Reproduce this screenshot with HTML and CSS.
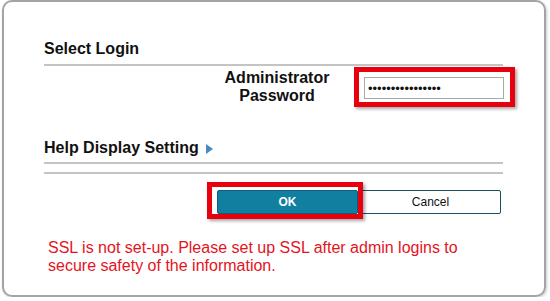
FILE: index.html
```html
<!DOCTYPE html>
<html lang="en">
<head>
    <meta charset="UTF-8">
    <title>Select Login</title>
    <link rel="stylesheet" href="styles.css">
</head>
<body>
<div class="panel">
    <h2 class="section-title">Select Login</h2>
    <div class="rule"></div>

    <div class="login-row">
        <div class="login-label">Administrator<br>Password</div>
        <div class="mark">
            <input class="pw-input" type="password" value="adminpassword123">
        </div>
    </div>

    <h2 class="section-title help-title">Help Display Setting
        <svg class="arrow" width="7" height="10" viewBox="0 0 7 10"><path d="M0 0 L7 5 L0 10 Z" fill="#4a88c2"/></svg>
    </h2>
    <div class="rule rule-help"></div>
    <div class="rule rule-second"></div>

    <div class="buttons">
        <div class="mark mark-btn">
            <button class="btn btn-ok">OK</button>
        </div>
        <button class="btn btn-cancel">Cancel</button>
    </div>

    <p class="ssl-note">SSL is not set-up. Please set up SSL after admin logins to secure safety of the information.</p>
</div>
</body>
</html>
```

FILE: styles.css
```css
body {
    margin: 0;
    background: #fff;
    font-family: Arial, 'Liberation Sans', sans-serif;
    color: #111;
}
.panel {
    box-sizing: border-box;
    width: 544px;
    height: 297px;
    margin-left: 2px;
    padding: 38px 0 0 40px;
    border: 2px solid #a4a4a4;
    border-radius: 10px;
    box-shadow: 1px 1px 3px rgba(0, 0, 0, 0.2);
}
.section-title {
    margin: 0;
    font-size: 16px;
    line-height: 18px;
    font-weight: bold;
}
.rule {
    width: 459px;
    height: 2px;
    margin-top: 6px;
    background: #c4c4c4;
}
.login-row {
    display: flex;
    align-items: flex-start;
    margin-top: 1px;
}
.login-label {
    width: 140px;
    margin: 2px 0 0 163px;
    text-align: center;
    font-size: 16px;
    line-height: 18px;
    font-weight: bold;
}
.mark {
    margin-left: 7px;
    padding: 5px 6px 3px 5px;
    border: 5px solid #e8000e;
    box-shadow: 2px 2px 3px rgba(0, 0, 0, 0.35);
}
.pw-input {
    display: block;
    box-sizing: border-box;
    width: 140px;
    height: 22px;
    margin: 0;
    padding: 0 3px;
    border: 1px solid #a9a9a9;
    font-family: Arial, 'Liberation Sans', sans-serif;
    font-size: 13px;
    color: #111;
    outline: none;
}
.help-title {
    margin-top: 32px;
}
.arrow {
    vertical-align: -1px;
    margin-left: 3px;
}
.rule-help {
    margin-top: 5px;
}
.rule-second {
    margin-top: 8px;
}
.buttons {
    display: flex;
    justify-content: flex-end;
    align-items: flex-start;
    width: 457px;
    margin-top: 8px;
}
.mark-btn {
    position: relative;
    z-index: 1;
    margin-left: 0;
    padding: 3px 0 0 5px;
    background: #fff;
}
.btn {
    box-sizing: border-box;
    width: 141px;
    height: 24px;
    margin: 0;
    padding: 0;
    font-family: Arial, 'Liberation Sans', sans-serif;
    font-size: 12px;
    border-radius: 2px;
    cursor: pointer;
}
.btn-ok {
    display: block;
    background: #117f9f;
    border: 1px solid #0d5f78;
    color: #fff;
    font-weight: bold;
}
.btn-cancel {
    margin-left: -3px;
    margin-top: 8px;
    background: #fff;
    border: 1px solid #1d4f60;
    color: #111;
}
.ssl-note {
    width: 440px;
    margin: 20px 0 0 4px;
    font-size: 16px;
    line-height: 18px;
    color: #e5131d;
}
```
